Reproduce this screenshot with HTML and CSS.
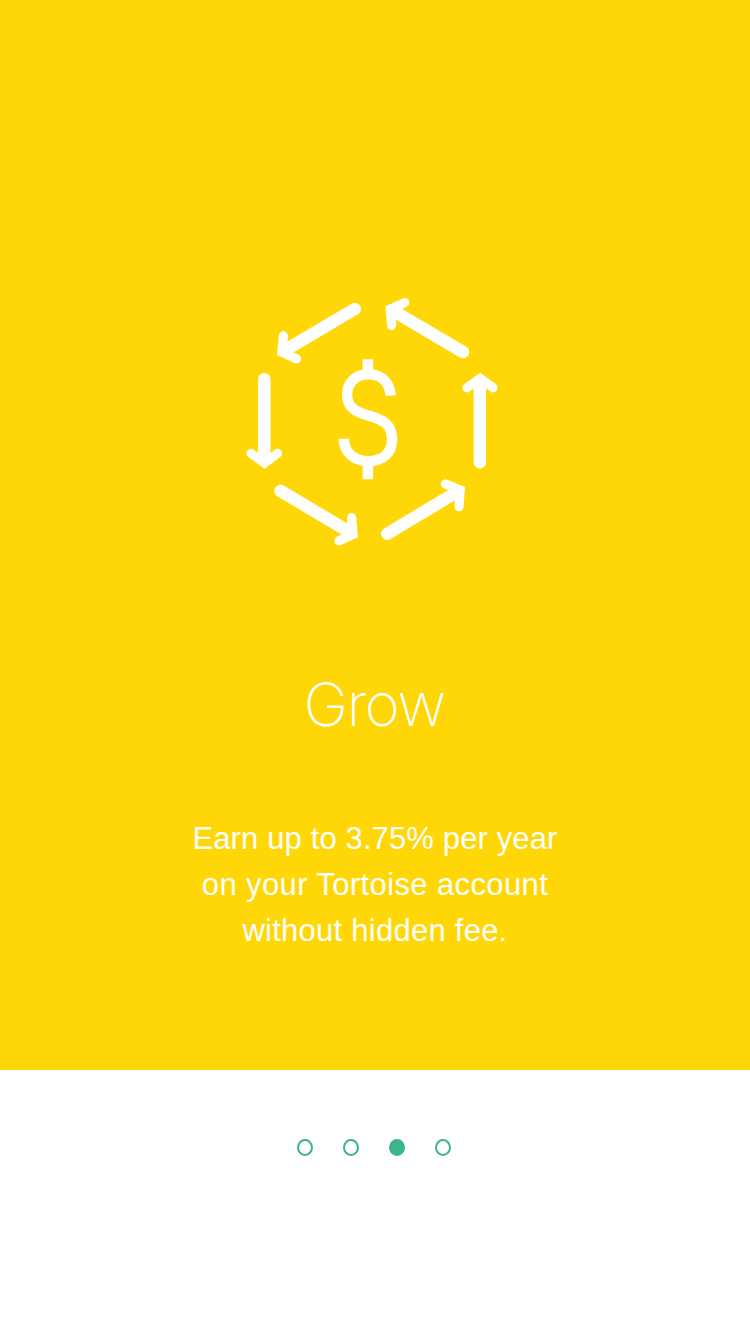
FILE: index.html
```html
<!DOCTYPE html>
<html lang="en">
<head>
<meta charset="utf-8">
<title>Grow</title>
<link rel="stylesheet" href="styles.css">
</head>
<body>
<main class="screen">
  <section class="panel">
    <svg class="icon" viewBox="240 290 264 264" aria-hidden="true">
      <g class="shaft">
        <path d="M354.8 309L286 349.6"/>
        <path d="M264.3 379.2V460"/>
        <path d="M280.5 490.9L349 531.7"/>
        <path d="M387.3 533.8L456 492.5"/>
        <path d="M479.8 462.3V381"/>
        <path d="M463.1 352.1L394.5 311.6"/>
      </g>
      <g class="head">
        <path d="M283.4 335.8L281.8 352.1L296.5 358.8"/>
        <path d="M251.2 453.4L264.6 463L277.6 453.4"/>
        <path d="M339 540.8L353.2 534.4L351.6 517.6"/>
        <path d="M445.4 483.9L460.2 490L459 506.7"/>
        <path d="M467 387.8L480.2 378.4L493.1 387.8"/>
        <path d="M404.8 302.6L390.3 309.1L391.6 325.4"/>
      </g>
      <g class="dollar">
        <path d="M367.9 359.2V372M367.9 463V479.2"/>
        <path d="M390.7 395.6C389.5 382 381 374.2 368.5 374.2C355.5 374.2 347.1 383 347.1 394.5C347.1 407 355 412 369 415.8C384 420 392.1 425 392.1 439.5C392.1 453 382.5 461.2 368.3 461.2C353.5 461.2 343.8 451.5 343.8 438.7"/>
      </g>
    </svg>
    <h1 class="title">Grow</h1>
    <p class="copy">
      <span class="line first">Earn up to 3.75% per year</span>
      <span class="line second">on your Tortoise account</span>
      <span class="line">without hidden fee.</span>
    </p>
  </section>
  <nav class="dots">
    <span class="dot"></span>
    <span class="dot"></span>
    <span class="dot active"></span>
    <span class="dot"></span>
  </nav>
</main>
</body>
</html>
```
FILE: styles.css
```css
body {
  margin: 0;
  background: #fff;
  font-family: "Liberation Sans", Arial, sans-serif;
}
.screen {
  height: 1334px;
  display: flex;
  flex-direction: column;
}
.panel {
  box-sizing: border-box;
  height: 1070px;
  padding-top: 290px;
  background: #ffd707;
  color: #fff;
  display: flex;
  flex-direction: column;
  align-items: center;
}
.icon {
  width: 264px;
  height: 264px;
  margin-right: 6px;
  fill: none;
  stroke: #fff;
}
.shaft {
  stroke-width: 12.4;
  stroke-linecap: round;
}
.head {
  stroke-width: 9.2;
  stroke-linecap: round;
  stroke-linejoin: miter;
}
.dollar {
  stroke-width: 10.4;
}
.title {
  margin: 115px 2px 0 0;
  font-family: Inter, sans-serif;
  font-size: 60px;
  font-weight: 200;
  line-height: 70px;
  letter-spacing: -1.4px;
}
.copy {
  margin: 77px 0 0;
  display: flex;
  flex-direction: column;
  align-items: center;
  font-size: 31px;
  line-height: 46px;
  letter-spacing: 0.25px;
  white-space: nowrap;
}
.first {
  letter-spacing: 0.13px;
}
.second {
  letter-spacing: 0.38px;
}
.dots {
  display: flex;
  justify-content: center;
  gap: 30px;
  padding: 69px 2px 0 0;
}
.dot {
  box-sizing: border-box;
  width: 16px;
  height: 17px;
  border: 2px solid #3db390;
  border-radius: 50%;
}
.active {
  background: #3db390;
}
```
